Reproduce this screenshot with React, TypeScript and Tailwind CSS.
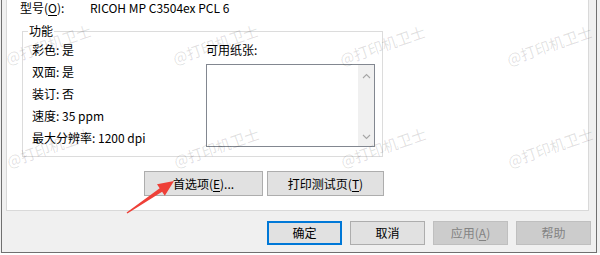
import React from 'react'

const FONT = { fontFamily: '"Noto Sans CJK SC", "Noto Sans", sans-serif' }

const FEATURES = ['彩色: 是', '双面: 是', '装订: 否', '速度: 35 ppm', '最大分辨率: 1200 dpi']

// watermark anchor = center of the "@" glyph
const MARKS = [
  [12, 57], [179, 57], [346, 58], [513, 58],
  [13, 160], [180, 160], [347, 160], [514, 160],
]

function Chevron({ up }: { up?: boolean }) {
  return (
    <svg width="9" height="6" viewBox="0 0 9 6" fill="none" stroke="#a6a6a6" strokeWidth="1.1">
      {up ? <path d="M1 5 L4.5 1.5 L8 5" /> : <path d="M1 1 L4.5 4.5 L8 1" />}
    </svg>
  )
}

function Btn({ children, w, className = '' }: { children: React.ReactNode; w: string; className?: string }) {
  return (
    <div className={`flex items-center justify-center ${w} ${className} text-[12px] leading-[16px]`}>
      {children}
    </div>
  )
}

export default function App() {
  return (
    <div className="relative h-[255px] w-[600px] overflow-hidden bg-[#f0f0f0] text-black" style={FONT}>
      <div className="ml-[1px] h-[253px] w-[596px] border-b border-l border-r border-[#707070] bg-[#f0f0f0]">
        {/* tab page */}
        <div className="ml-[4px] h-[211px] w-[583px] border-b border-l border-r border-[#d9d9d9] bg-white">
          <div className="flex pl-[13px] text-[12px] leading-[16px]">
            <span className="w-[70px]">
              型号(<span className="underline underline-offset-2">O</span>):
            </span>
            <span>RICOH MP C3504ex PCL 6</span>
          </div>

          <div className="relative ml-[15px] mt-[15px] h-[126px] w-[361px] border border-[#dcdcdc]">
            <span className="absolute left-[5px] top-[-9px] bg-white px-[1px] text-[12px] leading-[16px]">功能</span>
            <div className="flex pl-[9px] pt-[7px] text-[12px]">
              <div className="flex w-[174px] flex-col">
                {FEATURES.map(f => (
                  <div key={f} className="h-[22px] leading-[22px]">{f}</div>
                ))}
              </div>
              <div className="flex flex-col">
                <div className="h-[22px] leading-[22px]">可用纸张:</div>
                <div className="mt-[3px] flex h-[83px] w-[169px] justify-end border border-[#828790] bg-white">
                  <div className="flex w-[16px] flex-col items-center justify-between bg-[#f0f0f0] pb-[6px] pt-[8px]">
                    <Chevron up />
                    <Chevron />
                  </div>
                </div>
              </div>
            </div>
          </div>

          <div className="ml-[137px] mt-[14px] flex gap-[4px]">
            <Btn w="w-[119px] h-[25px]" className="border border-[#adadad] bg-[#e1e1e1]">
              首选项(<span className="underline underline-offset-2">E</span>)...
            </Btn>
            <Btn w="w-[117px] h-[25px]" className="border border-[#adadad] bg-[#e1e1e1]">
              打印测试页(<span className="underline underline-offset-2">T</span>)
            </Btn>
          </div>
        </div>

        {/* dialog buttons */}
        <div className="ml-[265px] mt-[10px] flex gap-[8px]">
          <Btn w="w-[75px] h-[24px]" className="border-2 border-[#0078d7] bg-[#e1e1e1]">确定</Btn>
          <Btn w="w-[75px] h-[24px]" className="border border-[#adadad] bg-[#e1e1e1]">取消</Btn>
          <Btn w="w-[75px] h-[24px]" className="border border-[#bfbfbf] bg-[#cccccc] text-[#838383]">
            应用(<span className="underline underline-offset-2">A</span>)
          </Btn>
          <Btn w="w-[75px] h-[24px]" className="border border-[#bfbfbf] bg-[#cccccc] text-[#838383]">帮助</Btn>
        </div>
      </div>
      <div className="h-[2px] w-full bg-white" />

      {/* watermarks */}
      {MARKS.map(([x, y], i) => (
        <span
          key={i}
          className="pointer-events-none absolute origin-[6px_10px] rotate-[-19deg] whitespace-nowrap text-[15px] leading-[20px] text-[#000]/[0.12]"
          style={{ left: x - 6, top: y - 10 }}
        >
          @打印机卫士
        </span>
      ))}

      {/* red arrow */}
      <svg className="pointer-events-none absolute left-0 top-0" width="600" height="255" viewBox="0 0 600 255">
        <polygon
          points="126.6,212.4 159.7,188.2 157.0,184.2 174,181 164.8,195.8 162.1,191.8 127.4,213.6"
          fill="#ee4038"
        />
      </svg>
    </div>
  )
}
